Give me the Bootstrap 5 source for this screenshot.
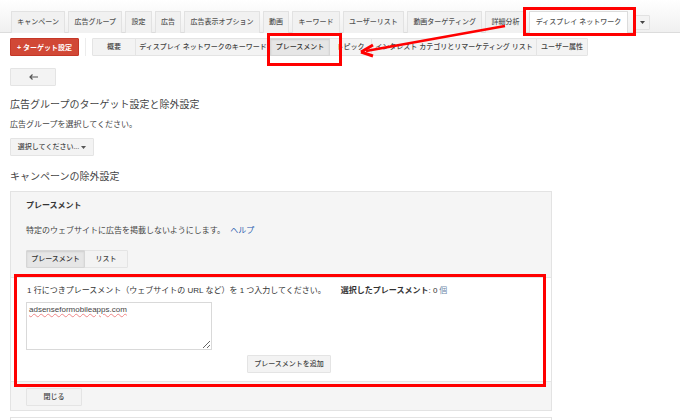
<!DOCTYPE html>
<html lang="ja">
<head>
<meta charset="utf-8">
<title>ディスプレイ ネットワーク</title>
<link href="https://cdn.jsdelivr.net/npm/bootstrap@5.3.0/dist/css/bootstrap.min.css" rel="stylesheet">
<style>
html,body{height:420px;overflow:hidden}
body{position:relative;background:#fff;color:#444;font-family:"Liberation Sans","Noto Sans CJK JP",sans-serif;font-size:8px;line-height:12px}
.tabbar{height:33px;padding:11px 0 0 11px;background:linear-gradient(#fff,#f0f0f0);border-bottom:1px solid #dcdcdc;flex-wrap:nowrap;gap:3px}
.tabbar .nav-link{height:22px;margin:0;padding:4px 5.25px 0;font-size:7px;line-height:12px;color:#555;font-weight:500;background:#f1f1f1;border:1px solid #e2e2e2;border-bottom:0;border-radius:1px 1px 0 0;white-space:nowrap}
.tabbar .nav-link.active{height:22px;padding:4px 6px 0;background:#fff;color:#555;border-color:#dcdcdc}
.tabbar .morebtn{display:flex;align-items:center;justify-content:center;width:15px;height:15px;margin:4px 0 0 4px;padding:0;background:#f3f3f3;border:1px solid #e2e2e2;border-radius:1px}
.tool-row{padding:5px 0 0 10px;height:35px}
.btn-target{width:69px;height:18px;padding:0;font-size:7px;line-height:17px;font-weight:700;color:#fff;background:#d14836;border:1px solid #c53727;border-radius:1px}
.vsep{width:1px;height:18px;margin:0 6px;background:#ececec}
.btn-group .gbtn,.gbtn{height:18px;padding:0;font-size:7px;line-height:16px;font-weight:500;color:#444;background:#f3f3f3;border:1px solid #e4e4e4;border-radius:1px;white-space:nowrap}
.btn-group .gbtn.active,.gbtn.active{background:#e6e6e6;border-color:#d6d6d6;box-shadow:inset 0 1px 2px rgba(0,0,0,.1);color:#333}
.w44{width:44px}.w136{width:136px}.w60{width:60px}.w43{width:43px}.w166{width:166px}.w52{width:52px}.w59{width:59px}.w46{width:46px}.w84{width:84px}.w56{width:56px}
.ttl{margin:0;font-size:10px;line-height:14px;font-weight:400;color:#444}
.ttl-a{margin-top:12px}
.ttl-b{margin-top:14px}
.choose-text{margin:7px 0 0}
.choose-btn{margin-top:7px}
.body-pad{padding:0 0 0 10px}
.panel-box{width:542px;height:220px;margin-top:7px;background:#f5f5f5;border:1px solid #e3e3e3;position:relative}
.panel-head{padding:8px 15px 0}
.panel-foot{padding:6px 15px 0}
.panel-title{margin:0;font-size:8px;line-height:12px;font-weight:700;color:#333}
.panel-desc{margin:13px 0 0}
.seg{margin-top:13px;width:fit-content}
.helplink{color:#2a5db0;text-decoration:none;margin-left:3px}
.inner{margin-top:9px;height:105px;background:#fff;border-top:1px solid #e6e6e6;border-bottom:1px solid #e6e6e6;padding:7px 15px 0}
.inner-line{display:flex;white-space:nowrap;color:#333;padding-left:1px}
.inner-line b{font-weight:700;margin-left:15px}
.qty{color:#6f88a8;margin-left:2px}
.url-input{display:block;width:186px;height:48px;margin-top:5px;padding:1px 2px;font-size:8px;line-height:11px;color:#444;border:1px solid #d9d9d9;border-radius:0;text-decoration:underline wavy #ee8888 1px;min-height:0}
.add-row{padding-left:221px;margin-top:5px}
.next-panel{width:542px;height:12px;margin-top:6px;background:#fff;border:1px solid #e3e3e3}
.redbox{position:absolute;border:3px solid #f00}
.box-a{left:523px;top:7px;width:113px;height:29px}
.box-b{left:267px;top:33px;width:75px;height:33px}
.box-c{left:14px;top:274px;width:532px;height:113px}
.arrow{position:absolute;left:350px;top:20px;width:165px;height:40px}
</style>
</head>
<body>
<ul class="nav nav-tabs tabbar">
<li class="nav-item"><a class="nav-link" href="#">キャンペーン</a></li>
<li class="nav-item"><a class="nav-link" href="#">広告グループ</a></li>
<li class="nav-item"><a class="nav-link" href="#">設定</a></li>
<li class="nav-item"><a class="nav-link" href="#">広告</a></li>
<li class="nav-item"><a class="nav-link" href="#">広告表示オプション</a></li>
<li class="nav-item"><a class="nav-link" href="#">動画</a></li>
<li class="nav-item"><a class="nav-link" href="#">キーワード</a></li>
<li class="nav-item"><a class="nav-link" href="#">ユーザーリスト</a></li>
<li class="nav-item"><a class="nav-link" href="#">動画ターゲティング</a></li>
<li class="nav-item"><a class="nav-link" href="#">詳細分析</a></li>
<li class="nav-item"><a class="nav-link active" href="#">ディスプレイ ネットワーク</a></li>
<li class="nav-item"><button class="morebtn" type="button" aria-label="その他"><svg width="5" height="3" viewBox="0 0 5 3"><path d="M0 0h5L2.5 3z" fill="#444"/></svg></button></li>
</ul>
<div class="d-flex align-items-start tool-row">
<button class="btn btn-target" type="button">+ ターゲット設定</button>
<span class="vsep"></span>
<div class="btn-group">
<button class="btn gbtn w44" type="button">概要</button>
<button class="btn gbtn w136" type="button">ディスプレイ ネットワークのキーワード</button>
<button class="btn gbtn w60 active" type="button">プレースメント</button>
<button class="btn gbtn w43" type="button">トピック</button>
<button class="btn gbtn w166" type="button">インタレスト カテゴリとリマーケティング リスト</button>
<button class="btn gbtn w52" type="button">ユーザー属性</button>
</div>
</div>
<div class="body-pad">
<button class="btn gbtn d-block w46" type="button" aria-label="戻る">
<svg class="d-block mx-auto" width="9" height="6" viewBox="0 0 9 6"><path d="M3.5.5 1 3l2.500 2.500M1.500 3H9" fill="none" stroke="#555" stroke-width="1.200"/></svg>
</button>
<h2 class="ttl ttl-a">広告グループのターゲット設定と除外設定</h2>
<p class="choose-text">広告グループを選択してください。</p>
<button class="btn gbtn d-block choose-btn w84" type="button">選択してください... <svg width="5" height="3" viewBox="0 0 5 3"><path d="M0 0h5L2.500 3z" fill="#555"/></svg></button>
<h2 class="ttl ttl-b">キャンペーンの除外設定</h2>
<div class="panel-box">
<div class="panel-head">
<h3 class="panel-title">プレースメント</h3>
<p class="panel-desc">特定のウェブサイトに広告を掲載しないようにします。 <a class="helplink" href="#">ヘルプ</a></p>
<div class="btn-group d-flex seg">
<button class="btn gbtn w59 active" type="button">プレースメント</button>
<button class="btn gbtn w44" type="button">リスト</button>
</div>
</div>
<div class="inner">
<div class="inner-line"><span>1 行につきプレースメント（ウェブサイトの URL など）を 1 つ入力してください。</span><b>選択したプレースメント</b><span>: 0</span><span class="qty">個</span></div>
<textarea class="form-control url-input" spellcheck="false">adsenseformobileapps.com</textarea>
<div class="add-row"><button class="btn gbtn d-block w84" type="button">プレースメントを追加</button></div>
</div>
<div class="panel-foot"><button class="btn gbtn d-block w56" type="button">閉じる</button></div>
</div>
<div class="next-panel"></div>
</div>
<div class="redbox box-a"></div>
<div class="redbox box-b"></div>
<div class="redbox box-c"></div>
<svg class="arrow" viewBox="0 0 165 40"><path d="M155 6 16 31" stroke="#f00" stroke-width="2.500" fill="none"/><path d="M11 32 23 25M11 32 23 36" stroke="#f00" stroke-width="3" fill="none"/></svg>
</body>
</html>
